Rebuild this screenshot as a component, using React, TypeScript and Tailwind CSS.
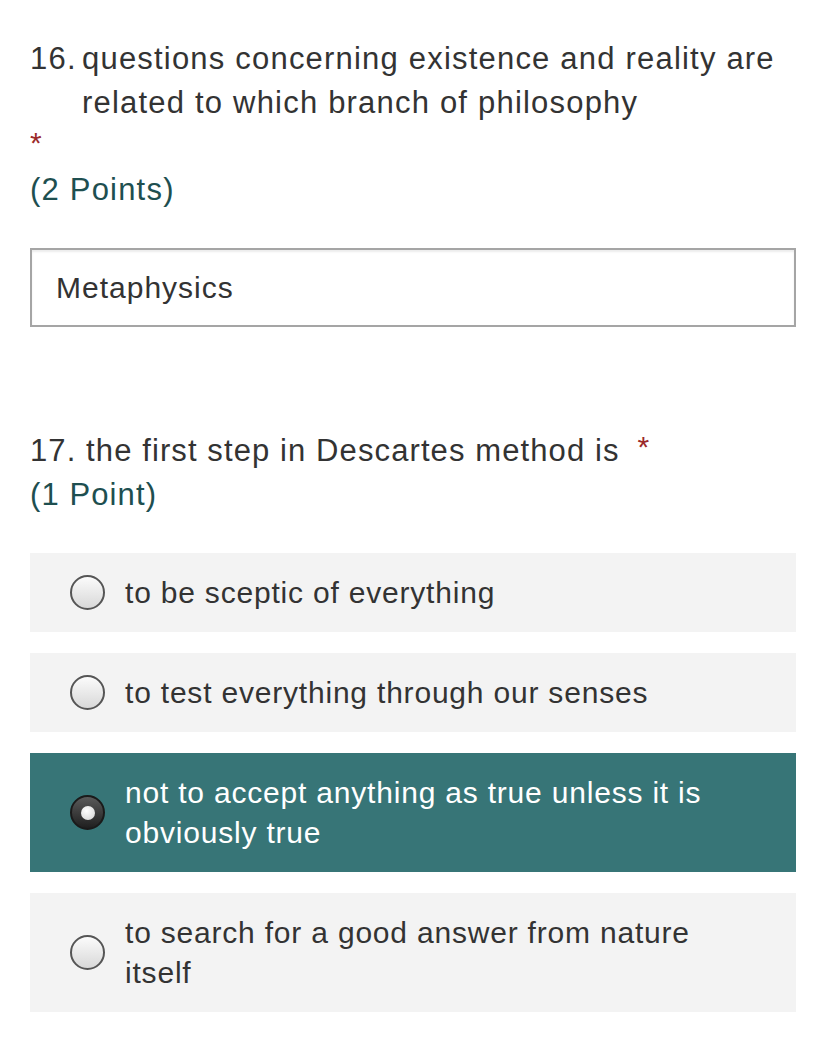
import React from "react";

const Radio = ({ checked }: { checked?: boolean }) =>
  checked ? (
    <span className="flex h-[35px] w-[35px] shrink-0 items-center justify-center rounded-full border-[2px] border-[#1a1a1a] bg-[linear-gradient(#5a5a5a,#1f1f1f)]">
      <span className="h-[14px] w-[14px] rounded-full bg-[radial-gradient(circle_at_40%_35%,#ffffff,#cfcfcf)]" />
    </span>
  ) : (
    <span className="h-[35px] w-[35px] shrink-0 rounded-full border-[2px] border-[#555] bg-[linear-gradient(#fbfbfb,#d8d8d8)]" />
  );

const Option = ({ text, checked }: { text: React.ReactNode; checked?: boolean }) => (
  <div
    className={`flex items-center gap-[20px] pl-[40px] pr-[20px] py-[19.5px] ${
      checked ? "bg-[#377577] text-white" : "bg-[#f3f3f3] text-[#333]"
    }`}
  >
    <Radio checked={checked} />
    <span className="text-[30px] leading-[40px] tracking-[0.8px]">{text}</span>
  </div>
);

export default function App() {
  return (
    <div
      className="min-h-[1047px] w-[827px] bg-white pl-[30px] pr-[31px] text-[#333]"
      style={{ fontFamily: '"Liberation Sans", Arial, sans-serif' }}
    >
      <div className="pt-[37px]">
        <div className="flex text-[31px] leading-[44px] tracking-[1.2px]">
          <span className="w-[52px] shrink-0">16.</span>
          <span>questions concerning existence and reality are related to which branch of philosophy</span>
        </div>
        <div className="h-[30px] text-[30px] leading-[36px] text-[#9b2a2a]">*</div>
        <div className="mt-[15px] text-[31px] leading-[40px] tracking-[1.2px] text-[#1e4f50]">(2 Points)</div>
      </div>
      <div className="mt-[38px] flex h-[79px] items-center border-[2px] border-[#a5a5a5] pl-[24px] text-[30px] tracking-[1px] shadow-[inset_0_2px_2px_rgba(0,0,0,0.08)]">
        Metaphysics
      </div>

      <div className="mt-[102px]">
        <div className="text-[31px] leading-[44px] tracking-[1.1px]">
          17. the first step in Descartes method is
          <span className="ml-[18px] align-top text-[30px] leading-[36px] text-[#9b2a2a]">*</span>
        </div>
        <div className="text-[31px] leading-[44px] tracking-[1.1px] text-[#1e4f50]">(1 Point)</div>
      </div>

      <div className="mt-[36px] flex flex-col gap-[21px]">
        <Option text="to be sceptic of everything" />
        <Option text="to test everything through our senses" />
        <Option text={<>not to accept anything as true unless it is<br />obviously true</>} checked />
        <Option text={<>to search for a good answer from nature<br />itself</>} />
      </div>
    </div>
  );
}
